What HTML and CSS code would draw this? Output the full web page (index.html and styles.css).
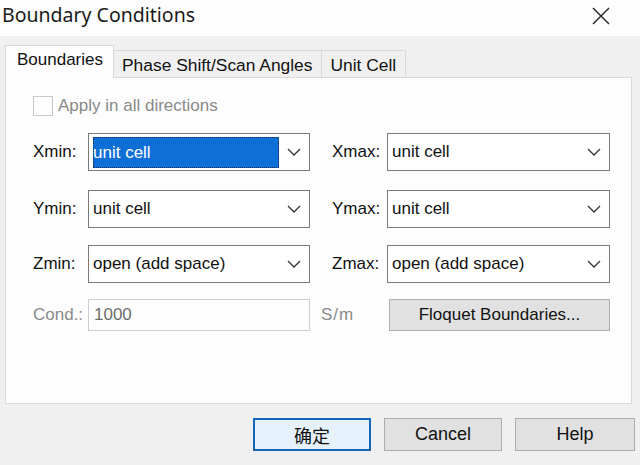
FILE: index.html
```html
<!DOCTYPE html>
<html>
<head>
<meta charset="utf-8">
<link rel="stylesheet" href="styles.css">
</head>
<body>
<div class="dialog">
  <div class="titlebar">
    <span class="title">Boundary Conditions</span>
    <svg class="close" width="18" height="18" viewBox="0 0 18 18"><path d="M1 1 L17 17 M17 1 L1 17" stroke="#222" stroke-width="1.4" fill="none"/></svg>
  </div>
  <div class="body">
    <div class="tabs">
      <div class="tab active">Boundaries</div>
      <div class="tab">Phase Shift/Scan Angles</div>
      <div class="tab">Unit Cell</div>
    </div>
    <div class="panel">
      <div class="check-row">
        <span class="checkbox"></span>
        <span class="disabled-text">Apply in all directions</span>
      </div>
      <div class="grid">
        <span class="label">Xmin:</span>
        <div class="combo"><span class="val selected">unit cell</span><svg class="arrow" width="14" height="8" viewBox="0 0 14 8"><path d="M1 1 L7 7 L13 1" stroke="#333" stroke-width="1.3" fill="none"/></svg></div>
        <span class="label">Xmax:</span>
        <div class="combo"><span class="val">unit cell</span><svg class="arrow" width="14" height="8" viewBox="0 0 14 8"><path d="M1 1 L7 7 L13 1" stroke="#333" stroke-width="1.3" fill="none"/></svg></div>
      </div>
      <div class="grid r2">
        <span class="label">Ymin:</span>
        <div class="combo"><span class="val">unit cell</span><svg class="arrow" width="14" height="8" viewBox="0 0 14 8"><path d="M1 1 L7 7 L13 1" stroke="#333" stroke-width="1.3" fill="none"/></svg></div>
        <span class="label">Ymax:</span>
        <div class="combo"><span class="val">unit cell</span><svg class="arrow" width="14" height="8" viewBox="0 0 14 8"><path d="M1 1 L7 7 L13 1" stroke="#333" stroke-width="1.3" fill="none"/></svg></div>
      </div>
      <div class="grid r3">
        <span class="label">Zmin:</span>
        <div class="combo"><span class="val">open (add space)</span><svg class="arrow" width="14" height="8" viewBox="0 0 14 8"><path d="M1 1 L7 7 L13 1" stroke="#333" stroke-width="1.3" fill="none"/></svg></div>
        <span class="label">Zmax:</span>
        <div class="combo"><span class="val">open (add space)</span><svg class="arrow" width="14" height="8" viewBox="0 0 14 8"><path d="M1 1 L7 7 L13 1" stroke="#333" stroke-width="1.3" fill="none"/></svg></div>
      </div>
      <div class="grid r4">
        <span class="label disabled-text">Cond.:</span>
        <div class="input">1000</div>
        <span class="label disabled-text unit">S/m</span>
        <div class="btn floquet">Floquet Boundaries...</div>
      </div>
    </div>
    <div class="footer">
      <div class="btn default">确定</div>
      <div class="btn">Cancel</div>
      <div class="btn help">Help</div>
    </div>
  </div>
</div>
</body>
</html>
```
FILE: styles.css
```css
html, body {
  margin: 0;
  padding: 0;
}
body {
  width: 640px;
  height: 465px;
  overflow: hidden;
  background: #f0f0f0;
  font-family: "Liberation Sans", "Noto Sans CJK SC", sans-serif;
  font-size: 17px;
  color: #111;
}
.dialog {
  width: 640px;
  height: 465px;
  display: flex;
  flex-direction: column;
}
.titlebar {
  height: 36px;
  background: #fdfdfd;
  display: flex;
  align-items: center;
  justify-content: space-between;
  padding: 0 30px 8px 2px;
  box-sizing: border-box;
}
.title {
  font-family: "Noto Sans", sans-serif;
  font-size: 19.5px;
  color: #1a1a1a;
}
.close {
  margin-top: 4px;
}
.body {
  flex: 1;
  display: flex;
  flex-direction: column;
  padding: 9px 0 0 5px;
}
.tabs {
  display: flex;
  align-items: flex-end;
  height: 32px;
}
.tab {
  height: 27px;
  box-sizing: border-box;
  border: 1px solid #d9d9d9;
  border-bottom: none;
  border-left: none;
  background: #f0f0f0;
  padding: 3px 9px 0 8px;
  line-height: 22px;
  font-size: 17.4px;
}
.tab.active {
  height: 33px;
  margin-bottom: -1px;
  border-left: 1px solid #d9d9d9;
  background: #fdfdfd;
  padding: 3px 10px 0 11px;
  position: relative;
  z-index: 1;
  font-size: 17px;
}
.panel {
  width: 627px;
  height: 327px;
  box-sizing: border-box;
  border: 1px solid #d9d9d9;
  background: #fdfdfd;
  padding: 17px 0 0 27px;
}
.check-row {
  display: flex;
  align-items: center;
  gap: 5px;
  height: 22px;
}
.checkbox {
  width: 18px;
  height: 18px;
  border: 1px solid #c8c8c8;
  background: #fdfdfd;
}
.disabled-text {
  color: #8a8a8a;
}
.grid {
  display: grid;
  grid-template-columns: 55px 222px 77px 223px;
  align-items: center;
  margin-top: 16px;
}
.grid > .label:nth-child(3) {
  margin-left: 22px;
}
.r2 { margin-top: 19px; }
.r3 { margin-top: 17px; }
.r4 { margin-top: 16px; }
.label {
  font-size: 17px;
}
.combo {
  height: 38px;
  box-sizing: border-box;
  border: 1px solid #7a7a7a;
  background: #fff;
  display: flex;
  align-items: center;
  justify-content: space-between;
  padding: 0 4px;
}
.val.selected {
  background: #0e6fd6;
  color: #fff;
  width: 186px;
  height: 31px;
  line-height: 31px;
  box-sizing: border-box;
  outline: 1px dotted #1b2b50;
  outline-offset: -1px;
}
.arrow {
  margin-right: 4px;
}
.input {
  height: 32px;
  box-sizing: border-box;
  border: 1px solid #cfcfcf;
  background: #fdfdfd;
  color: #6d6d6d;
  line-height: 30px;
  padding-left: 5px;
}
.unit {
  margin-left: 11px !important;
  letter-spacing: 1px;
}
.btn {
  height: 32px;
  box-sizing: border-box;
  border: 1px solid #adadad;
  background: #e1e1e1;
  display: flex;
  align-items: center;
  justify-content: center;
}
.floquet {
  margin-left: 2px;
  width: 221px;
}
.footer {
  display: flex;
  justify-content: flex-end;
  gap: 13px;
  padding: 14px 0 0 0;
}
.footer .btn {
  width: 118px;
  height: 33px;
  font-size: 18px;
}
.footer .btn.default {
  border: 2px solid #1566b8;
  background: #e5f1fb;
}
.footer .btn.help {
  width: 120px;
  margin-right: 5px;
}
```
